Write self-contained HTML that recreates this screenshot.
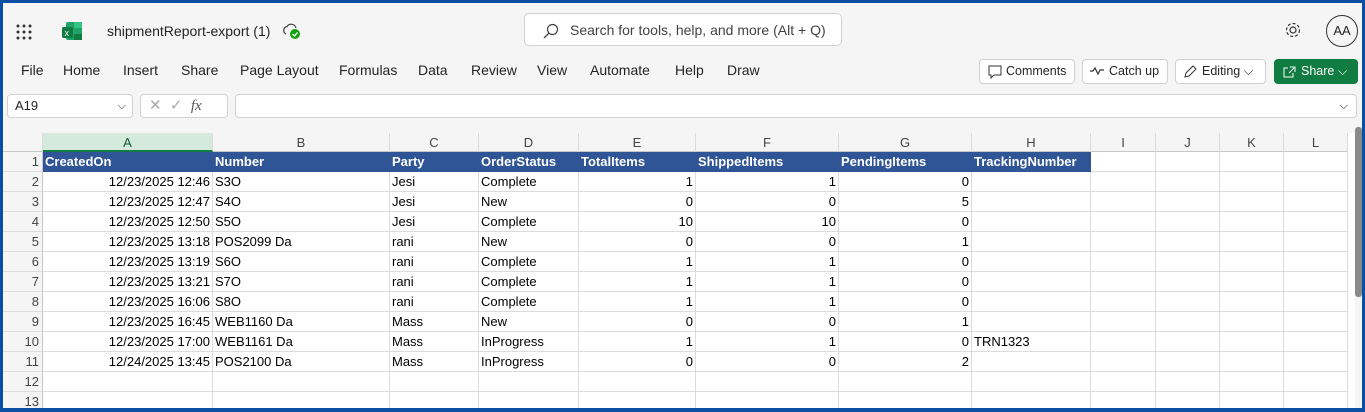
<!DOCTYPE html><html><head><style>
*{box-sizing:border-box;margin:0;padding:0}
body{width:1365px;height:412px;overflow:hidden;background:#0b4ea2;font-family:"Liberation Sans",sans-serif;position:relative}
#app{position:absolute;left:3px;top:3px;width:1359px;height:405px;background:#f5f5f5;overflow:hidden}
.a{position:absolute;white-space:nowrap}
.menu span{position:absolute;top:59px;font-size:14px;color:#242424}
.btn{position:absolute;top:56px;height:25px;border:1px solid #d1d1d1;background:#fff;border-radius:4px;font-size:12.5px;color:#242424;line-height:23px;padding-left:26px}
.grid{position:absolute;left:0;top:130px;width:1352px;height:280px;background:#fff}
.ch{position:absolute;top:0;height:19px;background:#f5f5f5;border-right:1px solid #dcdcdc;border-bottom:1px solid #c8c8c8;font-size:13px;color:#444;text-align:center;line-height:19px}
.rh{position:absolute;left:0;width:40px;height:20px;background:#f5f5f5;border-bottom:1px solid #dcdcdc;border-right:1px solid #c8c8c8;font-size:13px;color:#444;text-align:right;padding-right:3px;line-height:20px}
.c{position:absolute;height:20px;border-right:1px solid #dcdcdc;border-bottom:1px solid #dcdcdc;font-size:13px;color:#000;line-height:20px;padding:0 2px;white-space:nowrap;overflow:hidden}
.h{background:#2f5597;color:#fff;font-weight:bold;border-color:#2f5597}
.r{text-align:right}
</style></head><body><div id="app">
<svg class="a" style="left:12px;top:20px" width="18" height="18"><g fill="#333"><circle cx="3" cy="3" r="1.5"/><circle cx="9" cy="3" r="1.5"/><circle cx="15" cy="3" r="1.5"/><circle cx="3" cy="9" r="1.5"/><circle cx="9" cy="9" r="1.5"/><circle cx="15" cy="9" r="1.5"/><circle cx="3" cy="15" r="1.5"/><circle cx="9" cy="15" r="1.5"/><circle cx="15" cy="15" r="1.5"/></g></svg>
<svg class="a" style="left:59px;top:18px" width="22" height="20"><rect x="4" y="1" width="16" height="18" rx="2" fill="#21a366"/><rect x="12" y="1" width="8" height="6" fill="#33c481"/><rect x="12" y="13" width="8" height="6" fill="#107c41"/><rect x="0" y="6" width="11" height="11" rx="1.5" fill="#107c41"/><text x="2.5" y="15" font-size="9" fill="#fff" font-family="Liberation Sans">x</text></svg>
<div class="a" style="left:104px;top:20px;font-size:14px;color:#242424">shipmentReport-export (1)</div>
<svg class="a" style="left:279px;top:19px" width="20" height="18"><path d="M4 12a4 4 0 0 1 1-7.5A5 5 0 0 1 14 6" fill="none" stroke="#444" stroke-width="1.2"/><circle cx="13" cy="12" r="5" fill="#13a10e"/><path d="M10.5 12l2 2 3-3.5" stroke="#fff" stroke-width="1.3" fill="none"/></svg>
<div class="a" style="left:521px;top:10px;width:318px;height:33px;background:#fff;border:1px solid #d1d1d1;border-radius:5px"></div>
<svg class="a" style="left:540px;top:20px" width="16" height="16"><circle cx="9.5" cy="6.5" r="5" fill="none" stroke="#444" stroke-width="1.2"/><path d="M6 10L1 15" stroke="#444" stroke-width="1.3"/></svg>
<div class="a" style="left:567px;top:19px;font-size:14px;color:#424242">Search for tools, help, and more (Alt + Q)</div>
<svg class="a" style="left:1281px;top:18px" width="18" height="18"><circle cx="9" cy="9" r="3" fill="none" stroke="#333" stroke-width="1.2"/><circle cx="9" cy="9" r="6.5" fill="none" stroke="#333" stroke-width="1.2" stroke-dasharray="3 2"/></svg>
<div class="a" style="left:1323px;top:12px;width:32px;height:32px;border:1px solid #333;border-radius:50%;font-size:13px;text-align:center;line-height:30px;color:#242424">AA</div>
<div class="menu"><span style="left:18px">File</span><span style="left:60px">Home</span><span style="left:120px">Insert</span><span style="left:178px">Share</span><span style="left:237px">Page Layout</span><span style="left:336px">Formulas</span><span style="left:415px">Data</span><span style="left:468px">Review</span><span style="left:534px">View</span><span style="left:587px">Automate</span><span style="left:672px">Help</span><span style="left:724px">Draw</span></div>
<div class="btn" style="left:976px;width:96px">Comments<svg class="a" style="left:8px;top:5px" width="14" height="14"><path d="M1 1h12v9H6l-3 3v-3H1z" fill="none" stroke="#333"/></svg></div>
<div class="btn" style="left:1079px;width:86px">Catch up<svg class="a" style="left:6px;top:6px" width="16" height="10"><path d="M1 5h3l2-3 3 6 2-4h4" fill="none" stroke="#333" stroke-width="1.2"/></svg></div>
<div class="btn" style="left:1172px;width:91px">Editing ⌵<svg class="a" style="left:7px;top:5px" width="14" height="14"><path d="M2 12l1-4 7-7 3 3-7 7z" fill="none" stroke="#333"/></svg></div>
<div class="btn" style="left:1271px;width:84px;background:#107c41;border-color:#107c41;color:#fff">Share ⌵<svg class="a" style="left:7px;top:5px" width="14" height="14"><path d="M6 3H2v9h9V8M7 8l5-5M8 2h5v5" fill="none" stroke="#fff"/></svg></div>
<div class="a" style="left:4px;top:91px;width:126px;height:24px;background:#fff;border:1px solid #d1d1d1;border-radius:4px;font-size:13px;line-height:22px;padding-left:7px;color:#242424">A19<span style="position:absolute;right:6px;font-size:11px">⌵</span></div>
<div class="a" style="left:137px;top:91px;width:88px;height:24px;background:#fff;border:1px solid #d1d1d1;border-radius:4px;color:#aaa;font-size:15px;line-height:22px;padding-left:8px">✕ &nbsp;✓ &nbsp;<i style="color:#555;font-family:'Liberation Serif'">fx</i></div>
<div class="a" style="left:232px;top:91px;width:1122px;height:24px;background:#fff;border:1px solid #d1d1d1;border-radius:4px"><span style="position:absolute;right:8px;font-size:11px;line-height:22px">⌵</span></div>
<div class="grid" id="g"></div>
<div class="a" style="left:1352px;top:124px;width:7px;height:170px;background:#8a8a8a;border-radius:3px"></div>
</div>
<script>
var g=document.getElementById('g'),cols=[[40,210,'A'],[210,387,'B'],[387,476,'C'],[476,576,'D'],[576,693,'E'],[693,836,'F'],[836,969,'G'],[969,1088,'H'],[1088,1153,'I'],[1153,1217,'J'],[1217,1281,'K'],[1281,1345,'L']];
var h='<div class="ch" style="left:0;width:40px"></div>';
cols.forEach(function(c,i){h+='<div class="ch" style="left:'+c[0]+'px;width:'+(c[1]-c[0])+'px;'+(i==0?'background:#d3eadc;border-bottom:2px solid #107c41;color:#0e5c2f':'')+'">'+c[2]+'</div>'});
var d=[["CreatedOn","Number","Party","OrderStatus","TotalItems","ShippedItems","PendingItems","TrackingNumber"],
["12/23/2025 12:46","S3O","Jesi","Complete",1,1,0,""],["12/23/2025 12:47","S4O","Jesi","New",0,0,5,""],["12/23/2025 12:50","S5O","Jesi","Complete",10,10,0,""],["12/23/2025 13:18","POS2099 Da","rani","New",0,0,1,""],["12/23/2025 13:19","S6O","rani","Complete",1,1,0,""],["12/23/2025 13:21","S7O","rani","Complete",1,1,0,""],["12/23/2025 16:06","S8O","rani","Complete",1,1,0,""],["12/23/2025 16:45","WEB1160 Da","Mass","New",0,0,1,""],["12/23/2025 17:00","WEB1161 Da","Mass","InProgress",1,1,0,"TRN1323"],["12/24/2025 13:45","POS2100 Da","Mass","InProgress",0,0,2,""],["","","","","","","",""],["","","","","","","",""]];
for(var r=0;r<13;r++){var y=19+r*20;h+='<div class="rh" style="top:'+y+'px">'+(r+1)+'</div>';
cols.forEach(function(c,i){var v=i<8?d[r][i]:'';var cl='c'+(r==0&&i<8?' h':'')+(r>0&&(i==0||(i>=4&&i<=6))?' r':'');h+='<div class="'+cl+'" style="top:'+y+'px;left:'+c[0]+'px;width:'+(c[1]-c[0])+'px">'+v+'</div>'})}
g.innerHTML=h;
</script></body></html>
